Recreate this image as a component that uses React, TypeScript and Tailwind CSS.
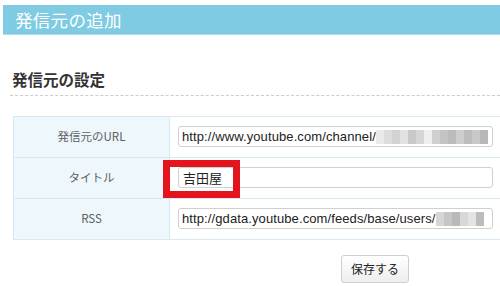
import React from "react";

const jp = { fontFamily: '"Noto Sans CJK JP", "Noto Sans", sans-serif' };
const lat = { fontFamily: '"Liberation Sans", "Noto Sans CJK JP", sans-serif' };

function Mosaic({ cells }: { cells: string[] }) {
  return (
    <div className="flex h-[14px]">
      {cells.map((c, i) => (
        <div key={i} className="w-[8px] h-full" style={{ background: c }} />
      ))}
    </div>
  );
}

function Row({ label, children }: { label: string; children: React.ReactNode }) {
  return (
    <div className="flex h-[41px] border-b border-[#d4e9f2]">
      <div
        className="w-[156px] shrink-0 bg-[#eef7fc] border-r border-[#d4e9f2] flex items-center justify-center text-[11.5px] text-[#606060]"
        style={jp}
      >
        {label}
      </div>
      <div className="flex-1 flex items-center pl-[8px]">{children}</div>
    </div>
  );
}

export default function App() {
  return (
    <div className="w-[500px] h-[286px] bg-white overflow-hidden relative">
      <div className="mt-[5px] ml-[3px] h-[30px] bg-[#7ecbe3] border-b border-[#a9dcec] flex items-center pl-[12px]">
        <span className="text-white text-[17.5px] leading-none tracking-[0.3px]" style={jp}>
          発信元の追加
        </span>
      </div>
      <div className="mt-[37px] ml-[12px] text-[15.5px] font-bold text-[#333] leading-none" style={jp}>
        発信元の設定
      </div>
      <div className="mt-[7px] ml-[10px] border-t border-dashed border-[#cccccc]" />
      <div className="mt-[20px] ml-[13px] w-[500px] border-t border-l border-[#d4e9f2]">
        <Row label="発信元のURL">
          <div className="w-[315px] h-[21px] border border-[#d0d0d0] rounded-[3px] bg-white flex items-center pl-[3px] text-[13px] text-[#222] overflow-hidden whitespace-nowrap" style={lat}>
            <span className="tracking-[0.1px]">http://www.youtube.com/channel/</span>
            <Mosaic
              cells={["#eaeaea", "#dcdcdc", "#d2d2d2", "#e2e2e2", "#c8c8c8", "#d6d6d6", "#efefef", "#d0d0d0", "#c4c4c4", "#bcbcbc", "#cdcdcd", "#bdbdbd", "#c9c9c9", "#b8b8b8"]}
            />
          </div>
        </Row>
        <Row label="タイトル">
          <div className="w-[315px] h-[21px] border border-[#d0d0d0] rounded-[3px] bg-white flex items-center pl-[4px] text-[13px] text-[#222]" style={jp}>
            吉田屋
          </div>
        </Row>
        <Row label="RSS">
          <div className="w-[315px] h-[21px] border border-[#d0d0d0] rounded-[3px] bg-white flex items-center pl-[3px] text-[13px] text-[#222] overflow-hidden whitespace-nowrap" style={lat}>
            <span className="tracking-[0.1px]">http://gdata.youtube.com/feeds/base/users/</span>
            <Mosaic cells={["#d6d6d6", "#c6c6c6", "#b9b9b9", "#d8d8d8", "#e4e4e4", "#bcbcbc"]} />
          </div>
        </Row>
      </div>
      <div className="mt-[15px] ml-[341px]">
        <button
          className="w-[68px] h-[28px] rounded-[3px] border border-[#cfcfcf] bg-gradient-to-b from-white to-[#eeeeee] text-[12px] text-[#222]"
          style={jp}
        >
          保存する
        </button>
      </div>
      <div className="absolute left-[163px] top-[160px] w-[77px] h-[38px] border-[7px] border-[#e3141e]" />
    </div>
  );
}
